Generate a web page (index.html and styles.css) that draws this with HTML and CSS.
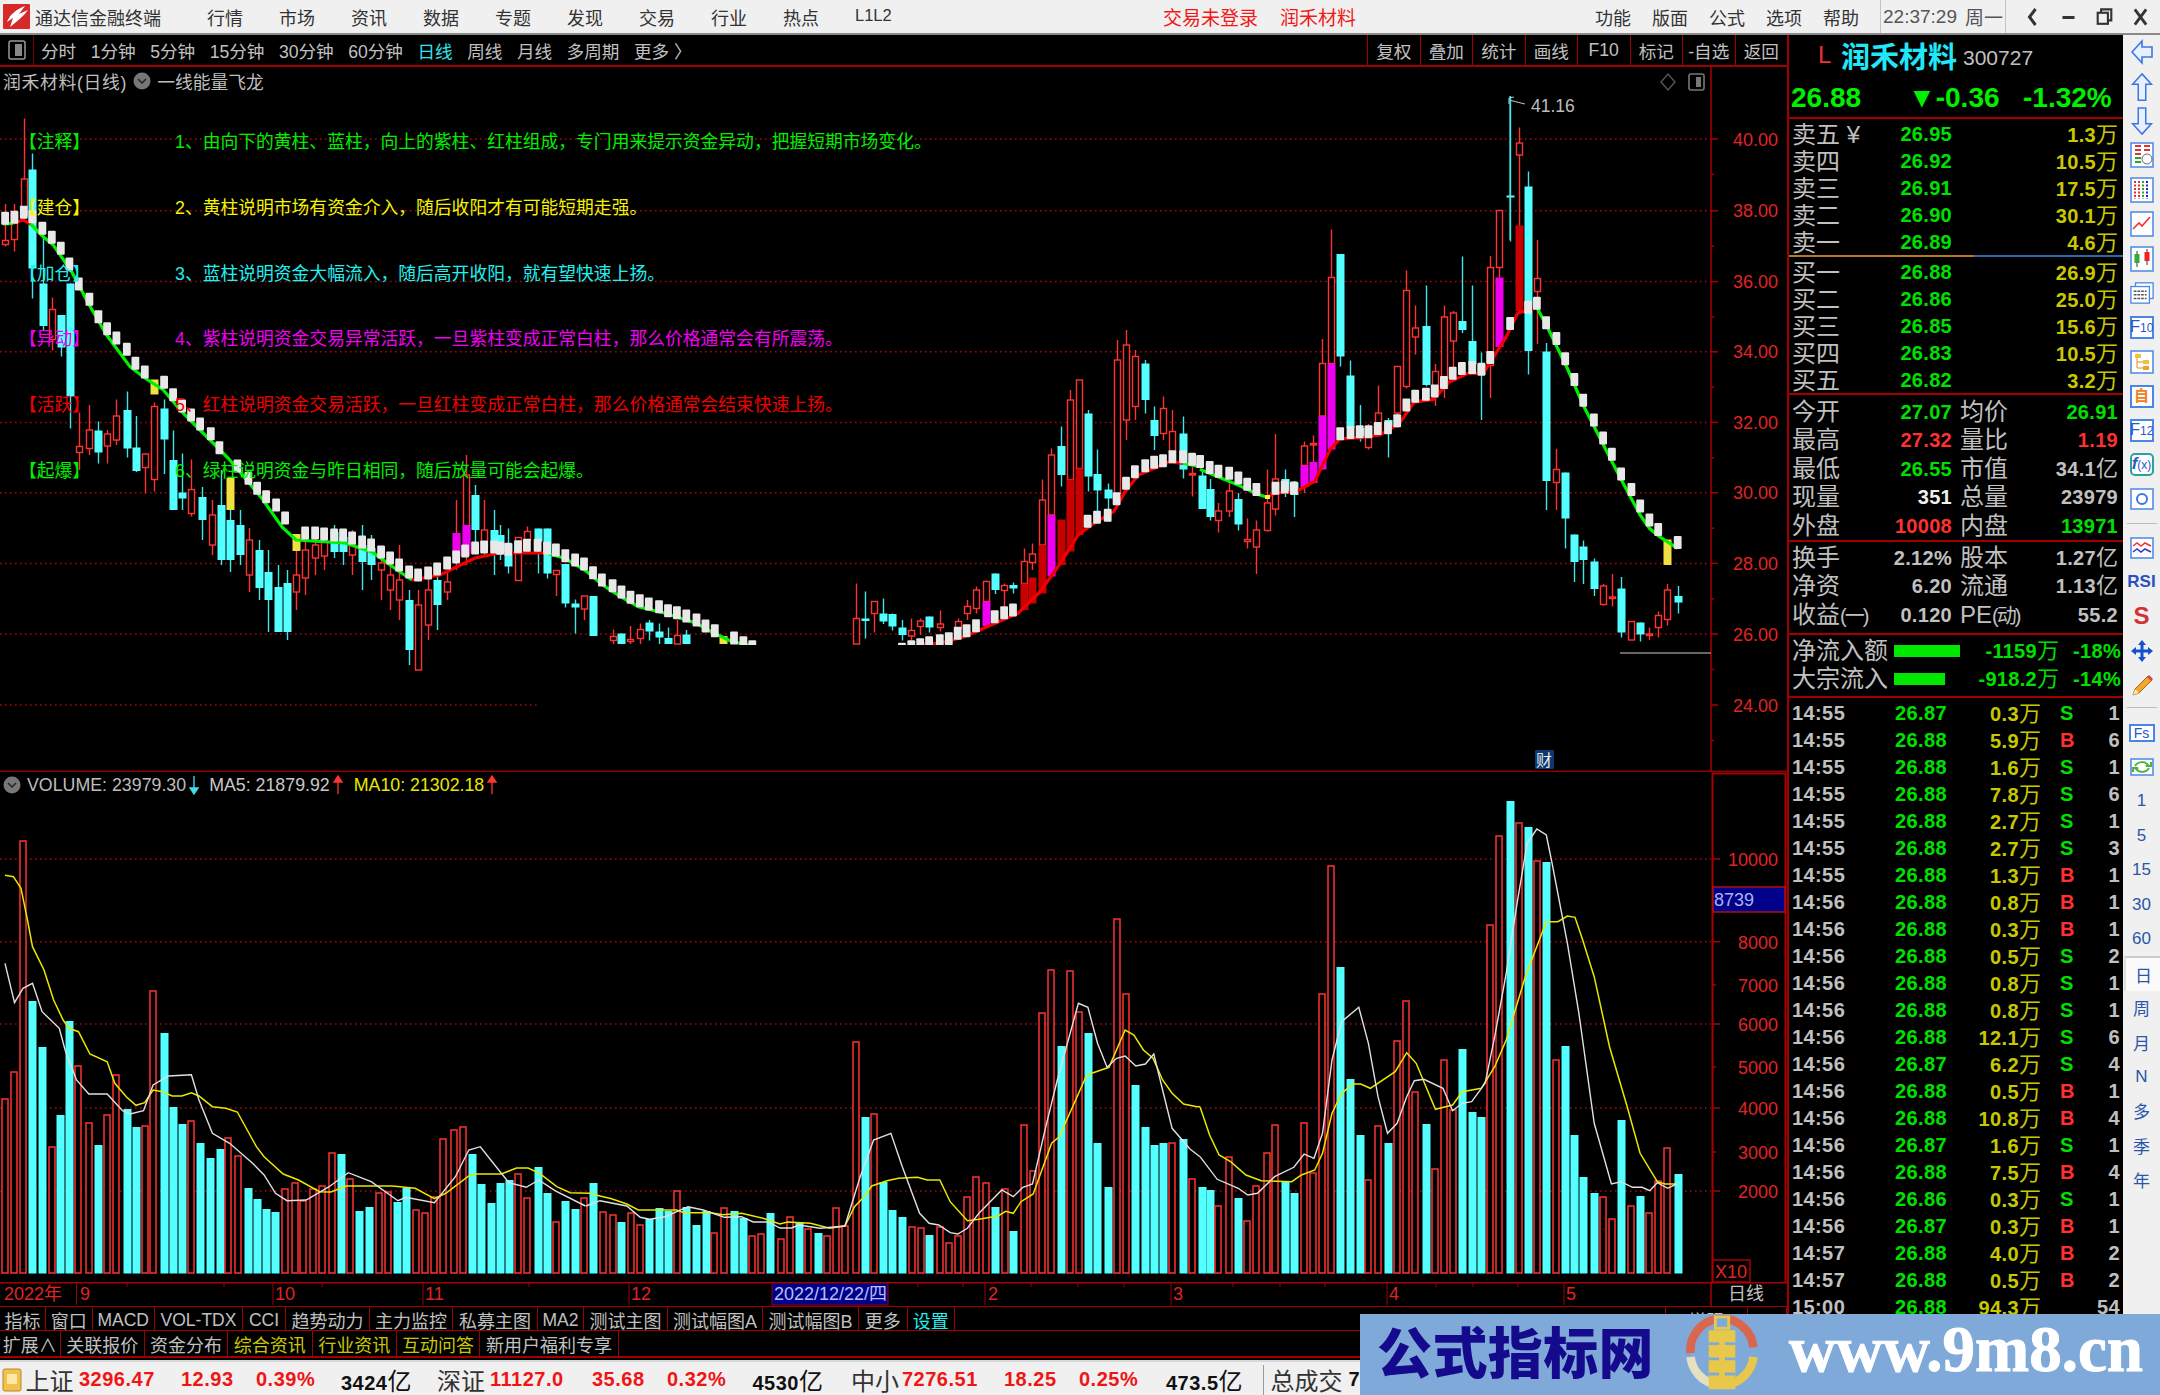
FILE: index.html
```html
<!DOCTYPE html>
<html lang="zh-CN">
<head>
<meta charset="utf-8">
<title>通达信金融终端</title>
<link rel="stylesheet" href="styles.css">
</head>
<body>
<div class="app">
  <header class="titlebar">
    <svg class="applogo" viewBox="0 0 27 25"><rect width="27" height="25" rx="1" fill="#d62a2a"/><path d="M22 2 C14 5 7 10 4 18 L10 14 L7 23 C13 18 20 13 25 6 L16 10 Z" fill="#fff"/></svg>
    <span class="appname">通达信金融终端</span>
    <nav class="menu">
      <span>行情</span><span>市场</span><span>资讯</span><span>数据</span><span>专题</span><span>发现</span><span>交易</span><span>行业</span><span>热点</span><span class="menu-lat">L1L2</span>
    </nav>
    <div class="alerts"><span>交易未登录</span><span>润禾材料</span></div>
    <nav class="menu menu-right">
      <span>功能</span><span>版面</span><span>公式</span><span>选项</span><span>帮助</span>
    </nav>
    <div class="clock"><span>22:37:29</span><span class="week">周一</span></div>
    <div class="winbtns">
      <svg viewBox="0 0 16 22"><path d="M11 3 L5 11 L11 19" fill="none" stroke="#333" stroke-width="3"/></svg>
      <svg viewBox="0 0 16 22"><rect x="2" y="10" width="12" height="3" fill="#333"/></svg>
      <svg viewBox="0 0 20 22"><rect x="2" y="6" width="12" height="13" fill="none" stroke="#333" stroke-width="2.5"/><path d="M6 6 V2 H18 V15 H14" fill="none" stroke="#333" stroke-width="2.5"/></svg>
      <svg viewBox="0 0 18 22"><path d="M3 3 L15 19 M15 3 L3 19" stroke="#333" stroke-width="3"/></svg>
    </div>
  </header>

  <div class="workspace">
    <section class="chartcol">
      <div class="toolbar">
        <div class="tool-icon"><svg viewBox="0 0 18 20"><rect x="1" y="1" width="16" height="18" rx="2" fill="none" stroke="#999" stroke-width="1.5"/><rect x="7" y="4" width="7" height="12" fill="#888"/></svg></div>
        <div class="periods">
          <span>分时</span><span>1分钟</span><span>5分钟</span><span>15分钟</span><span>30分钟</span><span>60分钟</span><span class="on">日线</span><span>周线</span><span>月线</span><span>多周期</span><span>更多 〉</span>
        </div>
        <div class="tool-cells">
          <span>复权</span><span>叠加</span><span>统计</span><span>画线</span><span>F10</span><span>标记</span><span>-自选</span><span>返回</span>
        </div>
      </div>

      <div class="pane pane-main">
        <svg id="mainChart" class="chart" viewBox="0 67 1787 705"></svg>
        <div class="legend legend-main">
          <span class="legend-name">润禾材料(日线)</span>
          <svg class="chev" viewBox="0 0 18 18"><circle cx="9" cy="9" r="8.5" fill="#777"/><path d="M5 7 L9 11 L13 7" fill="none" stroke="#222" stroke-width="1.5"/></svg>
          <span>一线能量飞龙</span>
        </div>
        <div class="notes">
          <div class="note c-green"><span>【注释】</span><span>1、由向下的黄柱、蓝柱，向上的紫柱、红柱组成，专门用来提示资金异动，把握短期市场变化。</span></div>
          <div class="note c-yellow"><span>【建仓】</span><span>2、黄柱说明市场有资金介入，随后收阳才有可能短期走强。</span></div>
          <div class="note c-cyan"><span>【加仓】</span><span>3、蓝柱说明资金大幅流入，随后高开收阳，就有望快速上扬。</span></div>
          <div class="note c-magenta"><span>【异动】</span><span>4、紫柱说明资金交易异常活跃，一旦紫柱变成正常白柱，那么价格通常会有所震荡。</span></div>
          <div class="note c-red"><span>【活跃】</span><span>5、红柱说明资金交易活跃，一旦红柱变成正常白柱，那么价格通常会结束快速上扬。</span></div>
          <div class="note c-green"><span>【起爆】</span><span>6、绿柱说明资金与昨日相同，随后放量可能会起爆。</span></div>
        </div>
      </div>

      <div class="pane pane-vol">
        <svg id="volChart" class="chart" viewBox="0 772 1787 510"></svg>
        <div class="legend legend-vol">
          <svg class="chev" viewBox="0 0 18 18"><circle cx="9" cy="9" r="8.5" fill="#777"/><path d="M5 7 L9 11 L13 7" fill="none" stroke="#222" stroke-width="1.5"/></svg>
          <span class="vol-a">VOLUME: 23979.30</span>
          <svg class="arrow" viewBox="0 0 10 20"><path d="M5 1 V18 M1 13 L5 19 L9 13 Z" stroke="#40e0f0" fill="#40e0f0" stroke-width="1.3"/></svg>
          <span class="vol-b">MA5: 21879.92</span>
          <svg class="arrow" viewBox="0 0 10 20"><path d="M5 19 V2 M1 7 L5 1 L9 7 Z" stroke="#f33" fill="#f33" stroke-width="1.3"/></svg>
          <span class="vol-c">MA10: 21302.18</span>
          <svg class="arrow" viewBox="0 0 10 20"><path d="M5 19 V2 M1 7 L5 1 L9 7 Z" stroke="#f33" fill="#f33" stroke-width="1.3"/></svg>
        </div>
      </div>

      <svg id="timeAxis" class="timeaxis" viewBox="0 1282 1787 24"></svg>

      <div class="tabs tabs-a">
        <span>指标</span><span>窗口</span><span class="lat">MACD</span><span class="lat">VOL-TDX</span><span class="lat">CCI</span><span>趋势动力</span><span>主力监控</span><span>私募主图</span><span class="lat">MA2</span><span>测试主图</span><span>测试幅图A</span><span>测试幅图B</span><span>更多</span><span class="c-cyan">设置</span><span class="blank"></span><span class="tab-extra">增强</span><span class="blank"></span>
      </div>
      <div class="tabs tabs-b">
        <span>扩展∧</span><span>关联报价</span><span>资金分布</span><span class="c-olive">综合资讯</span><span class="c-olive">行业资讯</span><span class="c-olive">互动问答</span><span>新用户福利专享</span>
      </div>
    </section>

    <aside class="quote">
      <div class="q-name"><span class="q-l">L</span><span class="q-title">润禾材料</span><span class="q-code">300727</span></div>
      <div class="q-price"><span>26.88</span><span>▼-0.36</span><span>-1.32%</span></div>

      <div class="book">
        <div class="row"><span class="lbl">卖五 ¥</span><span class="num g">26.95</span><span class="num q">1.3<i>万</i></span></div>
        <div class="row"><span class="lbl">卖四</span><span class="num g">26.92</span><span class="num q">10.5<i>万</i></span></div>
        <div class="row"><span class="lbl">卖三</span><span class="num g">26.91</span><span class="num q">17.5<i>万</i></span></div>
        <div class="row"><span class="lbl">卖二</span><span class="num g">26.90</span><span class="num q">30.1<i>万</i></span></div>
        <div class="row"><span class="lbl">卖一</span><span class="num g">26.89</span><span class="num q">4.6<i>万</i></span></div>
      </div>
      <div class="book-sep"></div>
      <div class="book book-buy">
        <div class="row"><span class="lbl">买一</span><span class="num g">26.88</span><span class="num q">26.9<i>万</i></span></div>
        <div class="row"><span class="lbl">买二</span><span class="num g">26.86</span><span class="num q">25.0<i>万</i></span></div>
        <div class="row"><span class="lbl">买三</span><span class="num g">26.85</span><span class="num q">15.6<i>万</i></span></div>
        <div class="row"><span class="lbl">买四</span><span class="num g">26.83</span><span class="num q">10.5<i>万</i></span></div>
        <div class="row"><span class="lbl">买五</span><span class="num g">26.82</span><span class="num q">3.2<i>万</i></span></div>
      </div>

      <div class="stats stats-a">
        <div class="srow"><span class="lbl">今开</span><span class="num g">27.07</span><span class="lbl">均价</span><span class="num g">26.91</span></div>
        <div class="srow"><span class="lbl">最高</span><span class="num r">27.32</span><span class="lbl">量比</span><span class="num r">1.19</span></div>
        <div class="srow"><span class="lbl">最低</span><span class="num g">26.55</span><span class="lbl">市值</span><span class="num d">34.1<i>亿</i></span></div>
        <div class="srow"><span class="lbl">现量</span><span class="num w">351</span><span class="lbl">总量</span><span class="num d">23979</span></div>
        <div class="srow"><span class="lbl">外盘</span><span class="num r">10008</span><span class="lbl">内盘</span><span class="num g">13971</span></div>
      </div>
      <div class="stats stats-b">
        <div class="srow"><span class="lbl">换手</span><span class="num d">2.12%</span><span class="lbl">股本</span><span class="num d">1.27<i>亿</i></span></div>
        <div class="srow"><span class="lbl">净资</span><span class="num d">6.20</span><span class="lbl">流通</span><span class="num d">1.13<i>亿</i></span></div>
        <div class="srow"><span class="lbl">收益<i class="par">(一)</i></span><span class="num d">0.120</span><span class="lbl">PE<i class="par">(动)</i></span><span class="num d">55.2</span></div>
      </div>
      <div class="flow">
        <div class="frow"><span class="lbl">净流入额</span><span class="fbar fbar-a"></span><span class="num g">-1159<i>万</i></span><span class="num g">-18%</span></div>
        <div class="frow"><span class="lbl">大宗流入</span><span class="fbar fbar-b"></span><span class="num g">-918.2<i>万</i></span><span class="num g">-14%</span></div>
      </div>

      <div class="ticks">
        <div class="trow"><span>14:55</span><span class="g">26.87</span><span class="q">0.3<i>万</i></span><span class="g">S</span><span>1</span></div>
        <div class="trow"><span>14:55</span><span class="g">26.88</span><span class="q">5.9<i>万</i></span><span class="r">B</span><span>6</span></div>
        <div class="trow"><span>14:55</span><span class="g">26.88</span><span class="q">1.6<i>万</i></span><span class="g">S</span><span>1</span></div>
        <div class="trow"><span>14:55</span><span class="g">26.88</span><span class="q">7.8<i>万</i></span><span class="g">S</span><span>6</span></div>
        <div class="trow"><span>14:55</span><span class="g">26.88</span><span class="q">2.7<i>万</i></span><span class="g">S</span><span>1</span></div>
        <div class="trow"><span>14:55</span><span class="g">26.88</span><span class="q">2.7<i>万</i></span><span class="g">S</span><span>3</span></div>
        <div class="trow"><span>14:55</span><span class="g">26.88</span><span class="q">1.3<i>万</i></span><span class="r">B</span><span>1</span></div>
        <div class="trow"><span>14:56</span><span class="g">26.88</span><span class="q">0.8<i>万</i></span><span class="r">B</span><span>1</span></div>
        <div class="trow"><span>14:56</span><span class="g">26.88</span><span class="q">0.3<i>万</i></span><span class="r">B</span><span>1</span></div>
        <div class="trow"><span>14:56</span><span class="g">26.88</span><span class="q">0.5<i>万</i></span><span class="g">S</span><span>2</span></div>
        <div class="trow"><span>14:56</span><span class="g">26.88</span><span class="q">0.8<i>万</i></span><span class="g">S</span><span>1</span></div>
        <div class="trow"><span>14:56</span><span class="g">26.88</span><span class="q">0.8<i>万</i></span><span class="g">S</span><span>1</span></div>
        <div class="trow"><span>14:56</span><span class="g">26.88</span><span class="q">12.1<i>万</i></span><span class="g">S</span><span>6</span></div>
        <div class="trow"><span>14:56</span><span class="g">26.87</span><span class="q">6.2<i>万</i></span><span class="g">S</span><span>4</span></div>
        <div class="trow"><span>14:56</span><span class="g">26.88</span><span class="q">0.5<i>万</i></span><span class="r">B</span><span>1</span></div>
        <div class="trow"><span>14:56</span><span class="g">26.88</span><span class="q">10.8<i>万</i></span><span class="r">B</span><span>4</span></div>
        <div class="trow"><span>14:56</span><span class="g">26.87</span><span class="q">1.6<i>万</i></span><span class="g">S</span><span>1</span></div>
        <div class="trow"><span>14:56</span><span class="g">26.88</span><span class="q">7.5<i>万</i></span><span class="r">B</span><span>4</span></div>
        <div class="trow"><span>14:56</span><span class="g">26.86</span><span class="q">0.3<i>万</i></span><span class="g">S</span><span>1</span></div>
        <div class="trow"><span>14:56</span><span class="g">26.87</span><span class="q">0.3<i>万</i></span><span class="r">B</span><span>1</span></div>
        <div class="trow"><span>14:57</span><span class="g">26.88</span><span class="q">4.0<i>万</i></span><span class="r">B</span><span>2</span></div>
        <div class="trow"><span>14:57</span><span class="g">26.88</span><span class="q">0.5<i>万</i></span><span class="r">B</span><span>2</span></div>
        <div class="trow"><span>15:00</span><span class="g">26.88</span><span class="q">94.3<i>万</i></span><span></span><span>54</span></div>
      </div>
    </aside>

    <aside class="sidebar">
      <div class="slot"><svg viewBox="0 0 24 30"><path d="M2 15 L12 4 V10 H22 V20 H12 V26 Z" fill="#e8f0ff" stroke="#3a78e0" stroke-width="1.6"/></svg></div>
      <div class="slot"><svg viewBox="0 0 24 32"><path d="M12 2 L22 13 H16 V30 H8 V13 H2 Z" fill="#e8f0ff" stroke="#3a78e0" stroke-width="1.6"/></svg></div>
      <div class="slot"><svg viewBox="0 0 24 32"><path d="M12 30 L22 19 H16 V2 H8 V19 H2 Z" fill="#e8f0ff" stroke="#3a78e0" stroke-width="1.6"/></svg></div>
      <div class="slot"><svg viewBox="0 0 24 26"><rect x="1" y="1" width="22" height="24" fill="#fff" stroke="#4a86e8" stroke-width="1.5"/><path d="M5 4 H11 M5 8 H11 M5 12 H11 M14 4 H20 M14 8 H20" stroke="#d33" stroke-width="2"/><path d="M5 16 H11 M5 20 H11" stroke="#2a2" stroke-width="2"/><circle cx="17" cy="17" r="5" fill="none" stroke="#666"/></svg></div>
      <div class="slot"><svg viewBox="0 0 24 26"><rect x="1" y="1" width="22" height="24" fill="#fff" stroke="#4a86e8" stroke-width="1.5"/><path d="M5 4 V22 M9 4 V22" stroke="#d33" stroke-width="2" stroke-dasharray="2 1.5"/><path d="M13 4 V22" stroke="#2a2" stroke-width="2" stroke-dasharray="2 1.5"/><path d="M17 4 V22" stroke="#22c" stroke-width="2" stroke-dasharray="2 1.5"/></svg></div>
      <div class="slot"><svg viewBox="0 0 24 26"><rect x="1" y="1" width="22" height="24" fill="#fff" stroke="#4a86e8" stroke-width="1.5"/><path d="M3 18 L9 12 L12 15 L20 6" fill="none" stroke="#e33" stroke-width="1.6"/></svg></div>
      <div class="slot"><svg viewBox="0 0 24 26"><rect x="1" y="1" width="22" height="24" fill="#fff" stroke="#4a86e8" stroke-width="1.5"/><path d="M7 5 V21 M17 3 V19" stroke="#333"/><rect x="4.5" y="8" width="5" height="9" fill="#3a3"/><rect x="14.5" y="6" width="5" height="9" fill="#e22"/></svg></div>
      <div class="slot"><svg viewBox="0 0 26 24"><rect x="6" y="1" width="19" height="17" fill="#fff" stroke="#4a86e8" stroke-width="1.4"/><rect x="1" y="5" width="20" height="18" fill="#fff" stroke="#4a86e8" stroke-width="1.4"/><path d="M4 10 H18 M4 14 H18 M4 18 H18" stroke="#555" stroke-width="1.6" stroke-dasharray="3 1"/></svg></div>
      <div class="slot"><span class="boxed">F<small>10</small></span></div>
      <div class="slot"><svg viewBox="0 0 24 24"><rect x="1" y="1" width="22" height="22" fill="#fff" stroke="#4a86e8" stroke-width="1.5"/><rect x="5" y="4" width="6" height="4" fill="#f0c040"/><rect x="13" y="10" width="6" height="4" fill="#f0c040"/><rect x="13" y="16" width="6" height="4" fill="#f0a030"/><path d="M7 8 V18 H13 M7 12 H13" fill="none" stroke="#e09020"/></svg></div>
      <div class="slot"><span class="boxed boxed-o">自</span></div>
      <div class="slot"><span class="boxed">F<small>12</small></span></div>
      <div class="slot"><span class="boxed boxed-fx"><em>f</em><small>(x)</small></span></div>
      <div class="slot"><svg viewBox="0 0 24 22"><rect x="1" y="1" width="22" height="20" fill="#fff" stroke="#4a86e8" stroke-width="1.5"/><circle cx="12" cy="11" r="5" fill="none" stroke="#3a78e0" stroke-width="2"/></svg></div>
      <div class="side-sep"></div>
      <div class="slot"><svg viewBox="0 0 24 22"><rect x="1" y="1" width="22" height="20" fill="#fff" stroke="#4a86e8" stroke-width="1.5"/><path d="M3 9 L7 6 L11 9 L15 6 L21 9" fill="none" stroke="#e33" stroke-width="1.5"/><path d="M3 15 L7 12 L11 15 L15 12 L21 15" fill="none" stroke="#33c" stroke-width="1.5"/></svg></div>
      <div class="slot"><span class="txt-rsi">RSI</span></div>
      <div class="slot"><span class="txt-s">S</span></div>
      <div class="slot"><svg viewBox="0 0 24 24"><path d="M12 1 L16 6 H13.5 V10.5 H18 V8 L23 12 L18 16 V13.5 H13.5 V18 H16 L12 23 L8 18 H10.5 V13.5 H6 V16 L1 12 L6 8 V10.5 H10.5 V6 H8 Z" fill="#1450c8"/></svg></div>
      <div class="slot"><svg viewBox="0 0 24 24"><path d="M3 22 L5 16 L18 3 L22 7 L9 20 Z" fill="#f0a830" stroke="#a06a10"/><path d="M3 22 L5 16 L9 20 Z" fill="#fbe3b0"/><path d="M18 3 L22 7" stroke="#d44" stroke-width="3"/></svg></div>
      <div class="side-sep side-sep-b"></div>
      <div class="slot slot-f"><span class="boxed boxed-w">Fs</span></div>
      <div class="slot"><svg viewBox="0 0 24 18"><rect x="1" y="1" width="22" height="16" fill="#fff" stroke="#4a86e8" stroke-width="1.5"/><path d="M5 8 C8 3 15 3 18 7 L16 8 H21 V4 M19 10 C16 15 9 15 6 11 L8 10 H3 V14" fill="none" stroke="#50b040" stroke-width="2"/></svg></div>
      <div class="slot slot-t">1</div><div class="slot slot-t">5</div><div class="slot slot-t">15</div><div class="slot slot-t">30</div><div class="slot slot-t">60</div>
      <div class="slot slot-t slot-on">日</div><div class="slot slot-t">周</div><div class="slot slot-t">月</div><div class="slot slot-t">N</div><div class="slot slot-t">多</div><div class="slot slot-t">季</div><div class="slot slot-t">年</div>
    </aside>
  </div>

  <footer class="status">
    <svg class="status-ico" viewBox="0 0 20 24"><rect x="1" y="1" width="18" height="22" rx="2" fill="#f3c04a" stroke="#b8862a"/><rect x="5" y="6" width="10" height="10" fill="#fbe9a8"/></svg>
    <span class="s-l">上证</span><span class="s-r">3296.47</span><span class="s-r">12.93</span><span class="s-r">0.39%</span><span class="s-k">3424<i>亿</i></span>
    <span class="s-l">深证</span><span class="s-r">11127.0</span><span class="s-r">35.68</span><span class="s-r">0.32%</span><span class="s-k">4530<i>亿</i></span>
    <span class="s-l">中小</span><span class="s-r">7276.51</span><span class="s-r">18.25</span><span class="s-r">0.25%</span><span class="s-k">473.5<i>亿</i></span>
    <span class="s-sep"></span><span class="s-l">总成交</span><span class="s-k">7</span>
  </footer>

  <div class="banner">
    <span class="b-title">公式指标网</span>
    <svg class="b-logo" viewBox="0 0 80 84">
      <path d="M7 40 A33 33 0 0 1 73 34" fill="none" stroke="#d9674f" stroke-width="9"/>
      <path d="M73 44 A33 33 0 0 1 46 73" fill="none" stroke="#e8c84a" stroke-width="9"/>
      <path d="M34 73 A33 33 0 0 1 7 44" fill="none" stroke="#e4e0c0" stroke-width="9"/>
      <rect x="33" y="2" width="14" height="12" fill="#7fa9d8" stroke="#e8c84a" stroke-width="3"/>
      <rect x="26" y="16" width="28" height="62" fill="#e8c84a"/>
      <path d="M26 30 H37 M43 30 H54 M26 46 H37 M43 46 H54 M26 62 H37 M43 62 H54" stroke="#7fa9d8" stroke-width="3"/>
    </svg>
    <span class="b-url">www.9m8.cn</span>
  </div>
</div>
<script src="chart.js"></script>
</body>
</html>
```

FILE: styles.css
```css
* { box-sizing: border-box; margin: 0; padding: 0; }
html, body { width: 2160px; height: 1395px; overflow: hidden; background: #000; }
body { font-family: "Liberation Sans", "Noto Sans CJK SC", sans-serif; }
i { font-style: normal; }

.app { position: relative; width: 2160px; height: 1395px; display: flex; flex-direction: column; overflow: hidden; }

/* title bar */
.titlebar { height: 35px; flex: none; display: flex; align-items: center; background: #f0f0f0; border-bottom: 2px solid #8a8a8a; color: #333; font-size: 18px; white-space: nowrap; }
.applogo { width: 27px; height: 25px; margin-left: 3px; flex: none; }
.appname { margin-left: 5px; width: 172px; }
.menu { display: flex; }
.menu span { width: 72px; }
.menu .menu-lat { font-size: 16.5px; padding-top: 2px; }
.alerts { display: flex; gap: 22px; margin-left: 236px; color: #f01818; font-size: 19px; }
.menu-right { margin-left: 239px; }
.menu-right span { width: 57px; }
.clock { display: flex; align-items: center; gap: 8px; height: 33px; width: 126px; padding-left: 2px; border-left: 1px solid #c4c4c4; border-right: 1px solid #c4c4c4; font-size: 19px; color: #555; }
.winbtns { display: flex; align-items: center; gap: 19px; margin-left: 18px; }
.winbtns svg { height: 22px; width: 17px; }

/* workspace */
.workspace { flex: 1; min-height: 0; display: flex; }
.chartcol { width: 1787px; flex: none; display: flex; flex-direction: column; background: #000; }

.toolbar { height: 32px; flex: none; display: flex; align-items: stretch; border-bottom: 2px solid #a00000; color: #c0c0c0; font-size: 17.6px; white-space: nowrap; }
.tool-icon { width: 34px; flex: none; display: flex; align-items: center; justify-content: center; border-right: 1px solid #700; }
.tool-icon svg { width: 18px; height: 20px; }
.periods { display: flex; gap: 14.5px; align-items: center; margin-left: 7px; }
.periods .on { color: #2fe6f0; }
.tool-cells { margin-left: auto; display: flex; }
.tool-cells span { width: 52.5px; display: flex; align-items: center; justify-content: center; border-left: 1px solid #a00000; }

.pane { position: relative; flex: none; }
.pane-main { height: 705px; }
.pane-vol { height: 510px; }
.chart { display: block; width: 1787px; height: 100%; }
.timeaxis { display: block; width: 1787px; height: 24px; flex: none; }
.chart text, .timeaxis text { font-family: "Liberation Sans", "Noto Sans CJK SC", sans-serif; }

.legend { position: absolute; display: flex; align-items: center; color: #bdbdbd; white-space: nowrap; }
.legend-main { left: 3px; top: 2px; height: 24px; font-size: 17.8px; gap: 6px; }
.legend-name { letter-spacing: .7px; }
.legend-vol { left: 3px; top: 2px; height: 22px; font-size: 17.8px; }
.chev { width: 18px; height: 18px; flex: none; }
.arrow { width: 10px; height: 20px; flex: none; margin-left: 3px; }
.vol-a { margin-left: 6px; }
.vol-b { margin-left: 10px; color: #c8c8c8; }
.vol-c { margin-left: 11px; color: #e8e800; }

.notes { position: absolute; left: 19px; top: 42.5px; display: grid; grid-auto-rows: 65.7px; font-size: 17.8px; white-space: nowrap; }
.note { display: grid; grid-template-columns: 156px 1fr; height: 65.7px; align-items: center; line-height: 24px; }
.c-green { color: #00f000; }
.c-yellow { color: #f4f400; }
.c-cyan { color: #20f0f0; }
.c-magenta { color: #f000f0; }
.c-red { color: #f00000; }
.c-olive { color: #c8c800; }

/* bottom tabs */
.tabs { flex: none; display: grid; color: #c0c0c0; font-size: 18px; white-space: nowrap; overflow: hidden; }
.tabs span { display: flex; align-items: center; justify-content: center; border-right: 1px solid #a00000; }
.tabs .lat { font-size: 17.5px; }
.tabs-a { height: 25px; border-top: 1px solid #a00000; border-bottom: 1px solid #a00000; grid-template-columns: 46px 46.5px 62.5px 88px 43px 84px 83px 85px 46px 84px 95px 96px 48.5px 47.5px 711px 82px 39px; }
.tabs-b { height: 27px; border-bottom: 2px solid #a00000; grid-template-columns: 60.5px 84.5px 83px 84.5px 84.5px 83px 139px; }

/* quote panel */
.quote { width: 336px; flex: none; background: #000; border-left: 2px solid #a00000; color: #c0c0c0; padding-left: 1px; overflow: hidden; }
.q-name { height: 40px; display: flex; align-items: center; }
.q-l { color: #f03030; font-size: 24px; margin-left: 28px; width: 23px; }
.q-title { color: #20e8f8; font-size: 29px; font-weight: 700; width: 122px; }
.q-code { font-size: 21px; color: #c0c0c0; margin-top: 5px; }
.q-price { height: 44px; display: grid; grid-template-columns: 117px 115px 95px; align-items: center; padding-left: 2px; font-size: 28px; font-weight: 700; color: #00f000; border-bottom: 2px solid #a00000; white-space: nowrap; margin-left: -1px; margin-right: -1px; padding-top: 4px; }

.num { font-size: 20px; font-weight: 700; text-align: right; letter-spacing: .3px; white-space: nowrap; }
.num i, .q i { font-weight: 400; font-size: 22px; letter-spacing: 0; }
.lbl { font-size: 24px; color: #c0c0c0; white-space: nowrap; }
.lbl .par { font-size: 20px; letter-spacing: -2px; }
.g { color: #00e000; }
.r { color: #ff3030; }
.w { color: #f0f0f0; }
.d { color: #c0c0c0; }
.q { color: #c8c800; }

.book { height: 136px; padding-top: 1.5px; }
.book-buy { height: 138px; border-bottom: 2px solid #a00000; margin-left: -1px; padding-left: 1px; }
.book-sep { height: 2px; background: linear-gradient(90deg, #b87a20 0 185px, #2a66a8 185px); margin-left: -1px; }
.row { height: 27px; line-height: 27px; display: grid; grid-template-columns: 60px 100px 1fr; padding: 0 5px 0 2px; align-items: center; }
.stats { margin-left: -1px; padding: 0 5px 0 3px; border-bottom: 2px solid #a00000; }
.stats-a { height: 146.7px; padding-top: 2.5px; }
.stats-b { height: 93.3px; padding-top: 2px; }
.srow { height: 28.5px; line-height: 28.5px; display: grid; grid-template-columns: 60px 100px 8px 60px 1fr; align-items: center; }
.srow .lbl:nth-child(3) { grid-column: 4; }
.flow { height: 63.5px; margin-left: -1px; padding: 2px 2px 0 3px; border-bottom: 2px solid #a00000; }
.frow { height: 28px; line-height: 28px; display: grid; grid-template-columns: 102px 66px 99px 1fr; align-items: center; }
.fbar { height: 12px; background: #00e800; }
.fbar-b { width: 51px; }
.ticks { padding-left: 2px; padding-top: 1.5px; }
.trow { height: 27px; line-height: 27px; display: grid; grid-template-columns: 60px 95px 94px 40px 39px; font-size: 20px; font-weight: 700; letter-spacing: .4px; color: #c0c0c0; white-space: nowrap; }
.trow span:nth-child(2), .trow span:nth-child(3), .trow span:nth-child(5) { text-align: right; }
.trow span:nth-child(4) { padding-left: 19px; }

/* sidebar */
.sidebar { width: 37px; flex: none; background: #f0f0f0; display: flex; flex-direction: column; align-items: center; overflow: hidden; }
.slot { height: 34.4px; width: 37px; flex: none; display: flex; align-items: center; justify-content: center; }
.slot svg { width: 24px; height: 30px; }
.slot-f { margin-top: 3px; }
.side-sep { height: 14px; width: 30px; flex: none; background: linear-gradient(#bbb, #bbb) center / 100% 1px no-repeat; }
.side-sep-b { height: 10px; }
.boxed { display: flex; align-items: baseline; justify-content: center; width: 24px; height: 23px; border: 2px solid #4a86e8; background: #fff; color: #2a56c8; font-size: 17px; line-height: 18px; }
.boxed small { font-size: 12px; }
.boxed-o { color: #f08020; font-weight: 700; font-size: 15px; }
.boxed-fx { border-color: #2aa0a0; border-radius: 5px; }
.boxed-fx em { font-weight: 700; }
.boxed-w { width: 26px; height: 18px; font-size: 14px; line-height: 14px; }
.txt-rsi { color: #2a50c0; font-weight: 700; font-size: 17px; }
.txt-s { color: #d83030; font-weight: 700; font-size: 24px; }
.slot-t { color: #2a56a8; font-size: 17px; }
.slot-on { background: #fafafa; border-top: 2px solid #ccc; border-left: 2px solid #ddd; margin-left: 2px; }

/* status bar */
.status { height: 35px; flex: none; background: #f0f0f0; border-top: 2px solid #d8d8d8; display: grid; grid-template-columns: 25.5px 53.5px 102px 75px 85px 96px 53px 102px 75px 85.5px 98.5px 51px 102px 75px 87px 96.5px 8px 78px 40px; align-items: center; font-size: 20px; letter-spacing: .5px; white-space: nowrap; }
.status-ico { width: 20px; height: 24px; margin-left: 2px; }
.s-l { font-size: 24px; color: #333; letter-spacing: 0; }
.s-r { color: #f01414; font-weight: 700; }
.s-k { color: #111; font-weight: 700; }
.s-k i { font-size: 24px; font-weight: 400; }
.s-sep { width: 1px; height: 30px; background: #999; }

/* banner */
.banner { position: absolute; left: 1360px; top: 1314px; width: 800px; height: 81px; background: #7fa9d8; display: flex; align-items: center; overflow: hidden; }
.b-title { align-self: flex-start; margin-left: 17px; width: 275px; font-family: "Noto Sans CJK SC", sans-serif; font-size: 55px; font-weight: 900; letter-spacing: .4px; color: #160a8c; line-height: 70px; white-space: nowrap; }
.b-logo { width: 78px; height: 80px; margin-left: 31px; flex: none; }
.b-url { align-self: flex-start; margin-left: 28px; font-family: "Liberation Serif", serif; font-weight: 700; font-size: 65px; color: #fff; -webkit-text-stroke: 1px #fff; line-height: 70px; white-space: nowrap; }
```

FILE: chart.js
```js
(function () {
  var RED = '#ff3232', CYAN = '#54ffff', GRID = '#a80808', AXIS = '#a80000', LABEL = '#e02424';

  function block(ox, oy, sx, sy) {
    return function (x, y) { return [ox + x / sx, oy + y / sy]; };
  }
  var Z7 = block(0, 100, 3, 3), PG = block(0, 0, 1, 1), Z11 = block(500, 420, 2.24, 3),
      Z9 = block(1200, 80, 2.613, 2.53),
      V8 = block(0, 760, 2.613, 3), V12 = block(600, 760, 2.613, 3), V10 = block(1200, 760, 2.613, 3);

  var candleData = [
    [Z7, 'r15,312,422,434,440 r43,312,340,418,455 r71,55,237,345,362 c97,160,208,505,595 c128,400,550,678,690 r155,592,628,718,752 c183,645,645,742,770 c210,550,550,890,985 r237,938,1040,1058,1110 r268,915,990,1045,1065 c295,965,992,1058,1090 r322,990,1002,1038,1090 r349,898,948,1020,1035 c380,875,930,1045,1072 c408,948,1042,1113,1116 r434,1060,1062,1102,1180 r461,908,920,1138,1175 c493,898,925,1018,1122 c520,992,1080,1230,1230 c546,1060,1178,1195,1230 r573,1078,1168,1240,1250 y461,838,884'],
    [PG, 'c202,487,497,520,540 r212,500,515,545,555 c221,470,505,560,565 c230,505,520,560,572 c240,510,525,555,565 r249,528,540,575,592 c259,540,550,588,600 c268,550,572,600,632 c278,565,587,632,632 c287,570,583,632,640 r296,545,575,592,610 r305,535,550,578,595 r315,530,545,558,575 r324,528,542,556,570 c334,525,532,552,558 c343,530,537,552,565 r352,530,545,555,575 c362,525,545,562,590 c371,535,548,565,580 r381,552,563,570,600 r390,565,575,590,610 r399,545,580,600,620 c409,590,600,650,665 r418,590,605,670,670 r428,575,590,625,640 c437,565,580,605,630 r447,570,582,592,600 r456,500,540,560,570 r466,455,475,555,565 c475,485,495,530,548 r484,500,530,548,555 c494,510,530,545,575 y230,478,510 y296,534,551 m456,533,556 m466,525,553'],
    [Z11, 'c0,315,345,395,420 c18,325,370,440,460 r40,352,352,482,482 r60,320,335,362,365 c84,325,325,365,460 c105,325,325,460,475 r125,450,452,463,528 c146,432,432,550,562 c168,538,550,562,640 r188,528,528,567,600 c208,528,528,648,648 r252,628,650,662,672 c272,640,640,672,672 r292,618,658,665,672 r313,610,628,656,672 c333,600,608,635,662 c356,610,635,652,672 c376,622,654,672,672 r396,600,646,672,672 c417,630,644,672,672 y500,648,672 ' +
      'r797,490,595,672,672 c817,515,595,603,655 r838,545,545,580,637 c857,535,580,605,612 c877,580,582,620,632 c900,600,622,645,662 r921,595,632,648,672 r941,595,603,620,645 c961,590,590,622,638 r985,572,612,622,635 r1025,595,604,625,640 r1045,540,560,580,600 r1066,500,510,565,580 r1089,482,484,545,565 m1089,545,618 c1108,460,460,510,522 r1129,490,496,512,560 c1149,488,495,505,520 r1173,385,425,490,490 d1173,490,570 r1192,370,402,428,450 d1192,472,550 r1213,178,240,375,375 d1213,375,520 r1234,85,105,285,285 m1234,285,470 c1256,20,78,165,200 d1256,298,435 r1277,-90,-60,178,178 d1277,178,395 r1297,-120,-120,145,145 d1297,145,345 c1317,-30,-20,170,215 c1337,88,162,212,275 c1361,190,208,235,270 r1382,-240,-180,220,240 r1402,-270,-225,0,60 r1422,-210,-190,-40,0 c1445,-180,-170,-60,-20 c1465,-40,0,48,90 r1485,-70,-35,40,60 r1506,-30,34,95,120 c1530,-10,40,148,175 r1550,140,160,164,230'],
    [Z9, 'c5,985,1000,1085,1085 c25,1010,1035,1105,1115 r48,1070,1090,1115,1145 r76,1015,1040,1090,1105 c100,1045,1060,1125,1140 r123,1110,1163,1167,1185 r147,1115,1138,1182,1250 r174,985,1070,1140,1142 r197,895,1010,1085,1102 c221,985,1010,1045,1055 c245,1015,1018,1050,1105 r272,915,926,975,1045 m272,975,1030 r296,900,920,922,1020 m296,966,1020 r319,655,717,850,985 m319,850,985 r343,378,500,717,935 m343,717,935 c366,440,440,700,725 c393,710,747,880,890 c417,822,880,905,915 r440,870,880,930,935 r464,773,842,890,900 c491,855,860,880,955 r515,725,725,842,880 r539,482,532,775,780 r562,570,627,650,695 c590,520,622,772,775 r613,718,737,790,825 r637,570,600,780,805 r660,585,590,660,750 c684,447,610,632,640 c711,520,660,720,745 c735,690,720,745,860 r758,445,475,722,805 r782,330,330,475,500 m782,500,675 c810,40,292,294,408 r833,120,160,190,370 d833,368,585 c857,232,270,685,745 r880,405,502,535,668 c904,665,687,1015,1088 r931,933,985,1018,1088 c954,993,993,1110,1185 c978,1150,1150,1220,1270 c1001,1165,1180,1215,1275 c1029,1210,1218,1288,1305 r1053,1275,1280,1327,1330 r1076,1250,1308,1310,1332 c1100,1258,1287,1398,1410 r1127,1370,1370,1417,1417 c1150,1373,1373,1403,1420 r1174,1385,1402,1404,1417 r1197,1345,1355,1385,1410 r1221,1275,1290,1365,1380 c1248,1280,1305,1322,1350 y1221,1163,1227']
  ];

  var boxData = [
    [Z7, '15,355 43,352 71,337 97,350 127,385 155,412 182,445 208,492 236,552 268,598 295,650 321,686 349,714 380,748 406,790 434,816 492,847 519,884 546,918 573,945 600,972 632,1001 658,1043 712,1098 745,1135 771,1165 798,1190'],
    [PG, '276,505 285,518 305,533 315,533 324,534 334,535 343,535 352,538 362,542 371,545 381,552 390,558 399,565 409,572 418,575 428,573 437,569 447,563 456,557 465,551 475,548 484,547 494,547'],
    [Z11, '0,385 18,388 40,380 60,376 84,376 105,385 125,390 146,407 168,420 188,432 208,458 228,480 252,497 272,516 292,532 313,542 333,552 356,560 376,572 396,578 417,588 440,600 460,618 481,632 524,654 545,668 565,680 900,688 921,680 941,674 961,668 985,662 1005,656 1025,640 1045,632 1066,617 1108,590 1129,578 1149,570 1316,304 1337,292 1361,286 1381,236 1402,190 1422,155 1445,137 1465,127 1485,122 1506,110 1530,110 1550,118'],
    [Z9, '0,965 25,980 48,990 76,995 100,1007 123,1023 147,1036 197,1033 221,1030 245,1032 366,895 393,892 417,890 440,890 464,882 491,880 515,862 539,822 562,800 590,795 613,787 637,765 660,742 684,730 711,727 735,732 758,702 810,616 857,575 880,565 904,614 931,654 954,705 978,758 1001,810 1029,860 1053,906 1076,947 1100,997 1127,1036 1150,1078 1174,1113 1197,1137 1248,1170']
  ];

  var lineData = [
    ['#00f000', Z7, '8,372 40,370'],
    ['#f00000', Z7, '40,370 70,360 92,372'],
    ['#00f000', Z7, '92,372 130,410 160,435 215,515 265,610 320,705 390,800 440,838 490,870 545,935 600,990 650,1040 685,1075 790,1200'],
    ['#00f000', PG, '263,500 282,527 296,540 345,543 372,552 400,572 412,580'],
    ['#f00000', PG, '412,580 440,575 475,558 500,553 546,553'],
    ['#00f000', Z11, '105,400 145,415 190,450 230,495 270,530 310,560 370,580 440,610 480,640 520,665 560,675'],
    ['#f00000', Z11, '935,672 985,670 1040,650 1100,615 1160,580 1210,515 1255,430 1295,345 1330,310 1375,275 1400,215 1430,165 1500,125 1530,130'],
    ['#00f000', Z11, '1530,130 1568,140'],
    ['#00f000', Z9, '0,985 50,1005 100,1025 150,1048 174,1055'],
    ['#f00000', Z9, '174,1055 200,1045 250,1042 300,1015 340,935 365,908 420,905 470,898 520,870 560,815 610,808 650,765 700,742 740,742 800,650 830,590 857,583 880,575'],
    ['#00f000', Z9, '880,575 910,630 960,730 1000,820 1050,915 1100,1010 1150,1100 1175,1135 1200,1155 1248,1185']
  ];

  var volData = [
    [V8, [13,-1018,37,-936,61,-242,84,722,111,862,135,-1160,158,1064,181,782,205,-918,233,-1088,257,1155,280,-1066,304,-944,331,1048,355,1100,378,-1098,401,-692,428,818,452,1042,475,1092,500,-1084,523,1150,550,1195,574,1168,597,-1134,621,-1188,649,1285,672,1317,696,1348,719,1357,746,-1287,770,-1268,793,-1322,818,-1287,841,-1278,868,-1178,891,1182,915,-1258,938,1352,965,1340,990,-1300,1014,-1296,1037,1325,1060,1285,1088,-1350,1111,-1358,1134,-1310,1158,-1138,1185,-1110,1209,-1102,1233,1182,1256,1272,1283,1330,1307,1268,1330,1260,1354,-1242,1378,-1314,1405,1222,1429,1298,1453,-1386,1476,1322,1503,1348,1526,-1314,1550,1268]],
    [V12, [8,-1355,33,-1364,56,1385,80,-1358,104,-1395,127,1378,155,1345,178,1352,202,-1292,225,1342,252,1394,276,1352,299,-1418,323,-1345,350,1354,374,1375,398,-1427,421,-1422,444,1358,472,-1436,496,-1372,519,1385,543,-1408,570,1420,594,-1427,617,-1345,641,-1398,668,-846,692,1070,716,-1062,739,1265,763,1350,790,1372,814,-1400,838,-1405,860,1425,888,-1400,911,-1450,935,-1427,958,-1310,982,-1250,1009,-1270,1033,1340,1057,-1288,1080,1412,1107,-1094,1131,-1234,1154,-760,1178,-630,1205,858,1229,-634,1252,-756,1276,818,1299,1150,1327,1282,1350,-476,1374,-702,1397,975,1425,1100,1448,1155,1472,1150,1495,-1148,1523,1138,1547,-1256]],
    [V10, [5,1282,25,1290,48,-1337,76,-1192,100,1313,123,-1382,147,-1278,174,-1180,197,-1094,221,1262,245,1298,272,-1088,296,-1240,319,-702,343,-318,366,620,393,958,417,1124,440,-1260,464,-1098,491,1150,515,-842,539,-724,562,-995,590,1092,613,-1228,637,-900,660,-1050,684,868,711,1056,735,1070,758,-495,782,-228,809,124,833,-188,857,200,880,-302,903,305,931,-900,954,858,978,1124,1001,1250,1029,1298,1053,-1310,1076,-1378,1100,1080,1127,-1337,1150,1308,1174,-1358,1197,-1262,1221,-1165,1248,1242]]
  ];

  var ma10 = [
    [V8, '13,346 35,350 55,385 70,470 85,560 115,630 140,720 165,780 180,805 205,815 235,882 280,905 300,970 330,1010 355,1036 378,1028 400,990 425,995 450,1008 475,1008 500,998 520,1008 555,1040 590,1045 620,1056 670,1160 690,1190 740,1242 780,1260 835,1295 865,1296 905,1278 1025,1278 1085,1285 1135,1316 1165,1300 1225,1248 1240,1242 1310,1242 1350,1224 1380,1224 1410,1240 1455,1280 1490,1298 1540,1300'],
    [V12, '0,1308 30,1316 70,1332 100,1350 200,1350 220,1358 290,1358 320,1364 370,1360 430,1376 470,1392 490,1386 550,1390 600,1405 640,1398 665,1340 690,1310 710,1278 750,1262 780,1255 830,1252 855,1260 888,1260 915,1325 960,1382 990,1378 1040,1368 1060,1354 1080,1360 1100,1325 1132,1302 1180,1150 1200,1130 1270,950 1285,940 1330,922 1372,810 1395,825 1420,870 1445,895 1470,960 1495,1000 1525,1032 1560,1040'],
    [V10, '0,1040 25,1125 50,1185 80,1205 120,1245 160,1262 240,1265 265,1245 300,1230 320,1180 345,1060 370,1000 400,972 420,972 445,985 510,935 540,878 565,910 615,1048 660,1035 685,995 735,985 770,920 800,840 850,650 905,485 935,485 960,468 980,472 1000,540 1030,650 1070,860 1115,1035 1150,1180 1195,1265 1215,1272 1245,1272']
  ];
  var ma5 = [
    [V8, '13,610 38,728 60,685 85,670 110,755 155,805 170,870 200,960 232,1002 280,1002 320,1052 340,1062 375,1052 400,975 440,948 500,944 520,1020 555,1120 600,1150 660,1210 690,1245 720,1300 750,1322 800,1320 860,1280 910,1238 970,1265 1040,1322 1060,1312 1135,1328 1190,1250 1225,1170 1255,1160 1310,1240 1330,1268 1375,1282 1408,1260 1450,1292 1530,1338'],
    [V12, '0,1322 70,1338 105,1372 130,1378 170,1370 230,1340 270,1350 325,1372 370,1370 400,1386 440,1386 470,1404 500,1404 520,1395 575,1405 640,1398 680,1250 715,1140 760,1120 790,1220 835,1360 860,1390 885,1395 915,1418 935,1422 960,1405 990,1360 1050,1290 1080,1310 1105,1282 1130,1272 1165,1100 1195,960 1250,730 1275,742 1300,850 1325,922 1350,895 1372,888 1400,918 1425,912 1447,882 1470,990 1495,1105 1540,1165'],
    [V10, '0,1190 45,1258 100,1285 125,1305 150,1300 195,1250 245,1222 272,1182 298,1195 320,1120 345,900 370,785 415,742 440,850 465,1010 490,1120 515,1090 540,1010 560,962 585,958 635,985 660,1052 685,1030 710,1025 745,970 770,830 800,640 830,420 855,250 880,207 905,225 920,310 960,550 990,760 1030,1090 1050,1170 1075,1272 1100,1265 1130,1282 1155,1282 1175,1292 1195,1268 1222,1285 1245,1272']
  ];

  function pts(map, str) {
    return str.trim().split(/\s+/).map(function (p) {
      var a = p.split(',');
      return map(+a[0], +a[1]);
    });
  }
  function ptStr(list) {
    return list.map(function (p) { return p[0].toFixed(1) + ',' + p[1].toFixed(1); }).join(' ');
  }
  function line(x1, y1, x2, y2, stroke, w, extra) {
    return '<line x1="' + x1 + '" y1="' + y1 + '" x2="' + x2 + '" y2="' + y2 + '" stroke="' + stroke + '" stroke-width="' + (w || 1) + '"' + (extra || '') + '/>';
  }
  function rect(x, y, w, h, fill, extra) {
    return '<rect x="' + x + '" y="' + y + '" width="' + w + '" height="' + h + '" fill="' + fill + '"' + (extra || '') + '/>';
  }
  function text(x, y, s, fill, size, extra) {
    return '<text x="' + x + '" y="' + y + '" fill="' + fill + '" font-size="' + size + '"' + (extra || '') + '>' + s + '</text>';
  }
  var DOTS = ' stroke-dasharray="1.6 3.4"';

  /* main chart */
  var m = '';
  var priceLines = [[139, '40.00'], [210.8, '38.00'], [281.6, '36.00'], [351.8, '34.00'], [422.4, '32.00'], [492.8, '30.00'], [563.4, '28.00'], [634, '26.00'], [705, '24.00']];
  priceLines.forEach(function (p, i) {
    m += line(0, p[0], i === 8 ? 538 : 1711, p[0], GRID, 1.5, DOTS);
    m += line(1711, p[0], 1718, p[0], AXIS, 1.5);
    m += line(1711, p[0] + 35.4, 1714, p[0] + 35.4, AXIS, 1.5);
    m += text(1778, p[0] + 6.5, p[1], LABEL, 18, ' text-anchor="end"');
  });
  m += line(1711, 67, 1711, 772, AXIS, 1.5);

  var solids = '';
  candleData.forEach(function (b) {
    var map = b[0];
    b[1].trim().split(/\s+/).forEach(function (tok) {
      var t = tok[0], a = tok.slice(1).split(',').map(Number);
      var x = Math.round(map(a[0], 0)[0]);
      var yy = function (v) { return Math.round(map(0, v)[1] * 2) / 2; };
      if (a.length === 3) {
        var col = t === 'm' ? '#f000f0' : t === 'd' ? '#c80000' : '#f0e040';
        solids += rect(x - 3.5, yy(a[1]), 8, yy(a[2]) - yy(a[1]), col);
        return;
      }
      var hi = yy(a[1]), top = yy(a[2]), bot = yy(a[3]), lo = yy(a[4]);
      if (t === 'r') {
        m += line(x + .5, hi, x + .5, lo, RED, 1.4);
        m += rect(x - 2.5, top, 6, Math.max(bot - top, 1.5), '#000', ' stroke="' + RED + '" stroke-width="1.4"');
      } else {
        m += line(x + .5, hi, x + .5, lo, '#3fe6e6', 1.4);
        m += rect(x - 3.5, top, 8, Math.max(bot - top, 2), CYAN);
      }
    });
  });
  m += solids;

  lineData.forEach(function (l) {
    m += '<polyline points="' + ptStr(pts(l[1], l[2])) + '" fill="none" stroke="' + l[0] + '" stroke-width="3.2"/>';
  });
  boxData.forEach(function (b) {
    pts(b[0], b[1]).forEach(function (p) {
      m += rect((p[0] - 3.8).toFixed(1), (p[1] - 6.5).toFixed(1), 7.8, 13, '#e8e8e8', ' rx="1"');
    });
  });
  m += rect(1265, 495, 5, 4, '#f4f040');

  /* erased area of the reference */
  m += rect(538, 645, 460, 127, '#000');

  /* high marker and reference line */
  m += '<path d="M1509 98 L1509 104 M1509 98 L1514 97 M1509 100 L1525 104" fill="none" stroke="#b8b8b8" stroke-width="1.2"/>';
  m += line(1510, 96, 1510, 240, '#3fe6e6', 1.2);
  m += text(1531, 112, '41.16', '#bdbdbd', 17.5);
  m += line(1620, 653, 1711, 653, '#8a8a8a', 1.5);

  /* top right icons and badge */
  m += '<path d="M1668 74 L1675 82 L1668 90 L1661 82 Z" fill="none" stroke="#555" stroke-width="1.4"/>';
  m += rect(1689, 74, 15, 16, 'none', ' stroke="#777" stroke-width="1.6" rx="2"');
  m += rect(1696, 77, 5, 10, '#777');
  m += rect(1535, 750, 19, 19, '#0c3a70', ' rx="1"');
  m += text(1536, 766, '财', '#e8e8e8', 16);
  m += line(0, 771.5, 1787, 771.5, '#8b0000', 2);
  document.getElementById('mainChart').innerHTML = m;

  /* volume chart */
  var v = '', BASE = 1273;
  [[859, '10000', 1], [941.7, '8000', 1], [985, '7000', 0], [1024, '6000', 1], [1067, '5000', 0], [1108, '4000', 1], [1152, '3000', 0], [1191, '2000', 1]].forEach(function (p) {
    if (p[2]) v += line(0, p[0], 1711, p[0], GRID, 1.5, DOTS);
    v += line(1713, p[0], p[2] ? 1720 : 1716, p[0], AXIS, 1.5);
    v += text(1778, p[0] + 7, p[1], LABEL, 18, ' text-anchor="end"');
  });

  volData.forEach(function (b) {
    var d = b[1];
    for (var i = 0; i < d.length; i += 2) {
      var x = Math.round(b[0](d[i], 0)[0]);
      var up = d[i + 1] < 0;
      var top = Math.round(b[0](0, Math.abs(d[i + 1]))[1]);
      if (up) v += rect(x - 3, top, 6, BASE - top, '#000', ' stroke="' + RED + '" stroke-width="1.5"');
      else v += rect(x - 3.5, top, 8, BASE - top + .5, CYAN);
    }
  });
  ma10.forEach(function (s) {
    v += '<polyline points="' + ptStr(pts(s[0], s[1])) + '" fill="none" stroke="#e8e800" stroke-width="1.5"/>';
  });
  ma5.forEach(function (s) {
    v += '<polyline points="' + ptStr(pts(s[0], s[1])) + '" fill="none" stroke="#e0e0e0" stroke-width="1.4"/>';
  });
  /* joins between the measured pieces */
  v += '<path d="M589 1193.3 L600 1196" fill="none" stroke="#e8e800" stroke-width="1.5"/>';
  v += '<path d="M1197 1106.7 L1200 1106.7" fill="none" stroke="#e8e800" stroke-width="1.5"/>';
  v += '<path d="M586 1206 L600 1200.7" fill="none" stroke="#e0e0e0" stroke-width="1.4"/>';
  v += '<path d="M1189 1148.3 L1200 1156.7" fill="none" stroke="#e0e0e0" stroke-width="1.4"/>';

  /* volume axis frame */
  v += rect(1712.5, 773.5, 73, 510, 'none', ' stroke="' + AXIS + '" stroke-width="2"');
  v += rect(1713, 887, 72, 25, '#00008b', ' stroke="#b01010" stroke-width="1.5"');
  v += text(1714, 906, '8739', '#a8b4e8', 18);
  v += rect(1712.5, 1260, 37.5, 22, 'none', ' stroke="' + AXIS + '" stroke-width="1.5"');
  v += text(1715, 1278, 'X10', LABEL, 18);
  document.getElementById('volChart').innerHTML = v;

  /* time axis */
  var t = '';
  t += line(0, 1282.5, 1787, 1282.5, AXIS, 2);
  t += line(1711, 1282, 1711, 1306, AXIS, 1.5);
  [127, 224, 322, 529, 918, 963, 1031, 1078, 1124, 1233, 1280, 1325, 1436, 1473, 1518].forEach(function (x) {
    t += line(x, 1283, x, 1287, AXIS, 1);
  });
  [[76.5, '', 0], [0, '2022年', 4], [273, '10', 275], [423, '11', 425], [629, '12', 631], [985, '2', 988], [1171, '3', 1173], [1387, '4', 1389], [1564, '5', 1566]].forEach(function (p) {
    if (p[0]) t += line(p[0], 1283, p[0], 1305, '#a00000', 1);
    if (p[1]) t += text(p[2], 1300, p[1], LABEL, 18);
  });
  t += text(80, 1300, '9', LABEL, 18);
  t += rect(772, 1283, 116, 22, '#00008b', ' stroke="#a00000"');
  t += text(774, 1300, '2022/12/22/四', '#b8c0f0', 18);
  t += text(1728, 1300, '日线', '#c0c0c0', 18);
  document.getElementById('timeAxis').innerHTML = t;
})();
```
